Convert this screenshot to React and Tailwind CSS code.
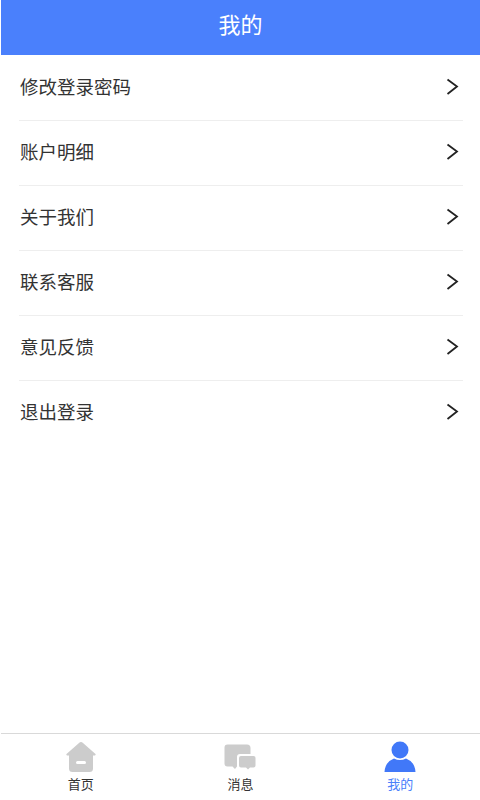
const FONT = "font-['Noto_Sans_CJK_SC','Liberation_Sans',sans-serif]";

const menuItems = ["修改登录密码", "账户明细", "关于我们", "联系客服", "意见反馈", "退出登录"];

const Chevron = () => (
  <svg width="14" height="18" viewBox="0 0 14 18" fill="none" className="shrink-0">
    <path d="M1.5 1.5 L11 8.5 L1.5 16" stroke="#222222" strokeWidth="1.8" />
  </svg>
);

const HomeIcon = () => (
  <svg width="32" height="32" viewBox="0 0 32 32">
    <path
      d="M16 1 Q17 1 18 2 L30.5 13 Q31 14 30 14.5 L28 14.5 L28 27.5 Q28 31 24.5 31 L7.5 31 Q4 31 4 27.5 L4 14.5 L2 14.5 Q1 14 1.5 13 L14 2 Q15 1 16 1 Z"
      fill="#cccccc"
    />
    <rect x="11" y="20" width="10" height="3" rx="1.5" fill="#ffffff" />
  </svg>
);

const ChatIcon = () => (
  <svg width="32" height="32" viewBox="0 -3 32 32">
    <path
      d="M3.5 0.5 L23 0.5 Q26.5 0.5 26.5 4 L26.5 10 L16 10 Q13 10 13 13 L13 22.5 L11 25 L8.5 22.5 L3.5 22.5 Q0.5 22.5 0.5 19.5 L0.5 3.5 Q0.5 0.5 3.5 0.5 Z"
      fill="#cccccc"
    />
    <path
      d="M17 12 L29.5 12 Q31.5 12 31.5 14 L31.5 21.5 Q31.5 23.5 29.5 23.5 L26 23.5 L24 25.5 L22 23.5 L17 23.5 Q15 23.5 15 21.5 L15 14 Q15 12 17 12 Z"
      fill="#cccccc"
    />
  </svg>
);

const UserIcon = () => (
  <svg width="32" height="32" viewBox="0 0 32 32">
    <circle cx="16" cy="9" r="8.5" fill="#4178f8" />
    <path d="M0.5 31 Q1 21 10 17.5 Q16 20.5 22 17.5 Q31 21 31.5 31 Z" fill="#4178f8" />
  </svg>
);

const tabs = [
  { label: "首页", icon: <HomeIcon />, color: "text-[#333333]" },
  { label: "消息", icon: <ChatIcon />, color: "text-[#333333]" },
  { label: "我的", icon: <UserIcon />, color: "text-[#4a80fb]" },
];

export default function App() {
  return (
    <div className={`${FONT} h-[800px] w-[480px] flex flex-col bg-white pl-px`}>
      <header className="h-[55px] shrink-0 flex items-center justify-center pb-[9px] bg-[#4a80fc] text-white text-[22px]">
        我的
      </header>

      <ul className="flex-1 pt-px pl-[18px] pr-[17px]">
        {menuItems.map((item, i) => (
          <li
            key={item}
            className={`h-[65px] flex items-center justify-between pb-[3px] pl-px pr-[3px] text-[18.5px] text-[#333333] ${
              i < menuItems.length - 1 ? "border-b border-[#eeeeee]" : ""
            }`}
          >
            <span>{item}</span>
            <Chevron />
          </li>
        ))}
      </ul>

      <nav className="h-[67px] shrink-0 grid grid-cols-3 border-t border-[#d9d9d9]">
        {tabs.map((tab) => (
          <div key={tab.label} className="flex flex-col items-center pt-[3px]">
            <div className="h-[36px] flex items-end justify-center">{tab.icon}</div>
            <span className={`text-[13px] leading-[22px] ${tab.color}`}>{tab.label}</span>
          </div>
        ))}
      </nav>
    </div>
  );
}
